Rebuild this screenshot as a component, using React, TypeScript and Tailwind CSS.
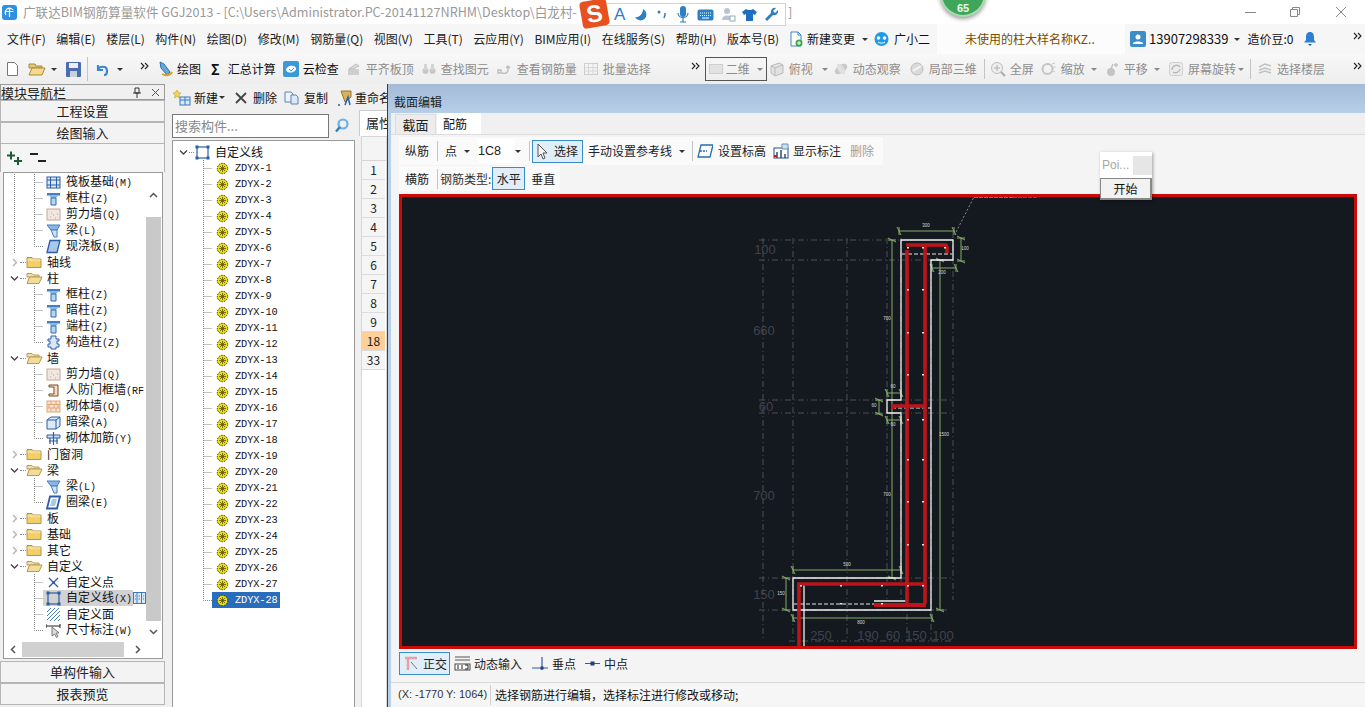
import React from 'react';

const S = ({ children, w = 16, h = 16, vb, className }: { children: React.ReactNode; w?: number; h?: number; vb?: string; className?: string }) => (
  <svg width={w} height={h} viewBox={vb ?? `0 0 ${w} ${h}`} className={`shrink-0 ${className ?? ''}`} fill="none">{children}</svg>
);
const Caret = ({ className }: { className?: string }) => (
  <span className={`inline-block w-0 h-0 border-x-[3px] border-x-transparent border-t-[3px] border-t-[#333] shrink-0 ${className ?? ''}`} />
);
const More = ({ className }: { className?: string }) => (
  <S w={9} h={8} className={className}><path d="M1 1l3 3-3 3M5 1l3 3-3 3" stroke="#222" strokeWidth="1.1" /></S>
);
const Sep = ({ className }: { className?: string }) => <span className={`w-px h-[20px] bg-[#c4c4c4] shrink-0 ${className ?? ''}`} />;

/* ---------- toolbar icons ---------- */
const GrayIcon = ({ kind }: { kind: number }) => (
  <S>
    {kind === 0 && <><rect x="2" y="8" width="11" height="6" fill="#cfcfcf" /><path d="M3 8l7-5 3 2-6 3z" fill="#dedede" stroke="#bbb" /></>}
    {kind === 1 && <><circle cx="4.5" cy="10" r="3" fill="#c8c8c8" /><circle cx="11.5" cy="10" r="3" fill="#c8c8c8" /><rect x="3" y="3" width="3" height="6" fill="#d4d4d4" /><rect x="10" y="3" width="3" height="6" fill="#d4d4d4" /></>}
    {kind === 2 && <path d="M1 9h3v3H1zM5 12c3 1 6 0 6-3V5M9 7l2-2 2 2" stroke="#bdbdbd" strokeWidth="1.4" />}
    {kind === 3 && <><rect x="1.5" y="2.5" width="13" height="11" stroke="#cdcdcd" /><path d="M1.5 6.5h13M1.5 10h13M5.5 2.5v11M10 2.5v11" stroke="#d8d8d8" /></>}
    {kind === 4 && <><path d="M2 5l8-3 4 2v8l-8 3-4-3z" fill="#e2e2e2" stroke="#bbb" /><path d="M6 7v8M6 7l8-3M6 7L2 5" stroke="#bbb" /></>}
    {kind === 5 && <><ellipse cx="8" cy="8" rx="7" ry="4" transform="rotate(-35 8 8)" fill="#c9c9c9" /><ellipse cx="8" cy="8" rx="3" ry="6" transform="rotate(-35 8 8)" fill="#e0e0e0" /></>}
    {kind === 6 && <><circle cx="8" cy="8" r="6" fill="#dadada" stroke="#bcbcbc" /><path d="M4 10l8-5" stroke="#f5f5f5" strokeWidth="2" /></>}
    {kind === 7 && <><circle cx="7" cy="7" r="5.5" stroke="#bcbcbc" fill="#efefef" /><path d="M7 4v6M4 7h6" stroke="#b0b0b0" /><path d="M11 11l4 4" stroke="#aaa" strokeWidth="2" /></>}
    {kind === 8 && <><circle cx="6.5" cy="8" r="5" stroke="#c4c4c4" strokeWidth="2" /><path d="M11 3l3-1M12 6h3M11 10l3 1" stroke="#ccc" /></>}
    {kind === 9 && <><circle cx="7" cy="11" r="4" fill="#c4c4c4" /><path d="M7 8l2-5M12 2v4M10 4h4" stroke="#c0c0c0" strokeWidth="1.4" /></>}
    {kind === 10 && <><rect x="1.5" y="1.5" width="13" height="13" rx="2" fill="#ececec" stroke="#cfcfcf" /><path d="M4 9a4.5 4.5 0 018-3M12 8a4.5 4.5 0 01-7 3" stroke="#b5b5b5" strokeWidth="1.3" /></>}
    {kind === 11 && <path d="M2 6l6-3 6 2M2 9l6-2 6 2M2 12l6-2 6 2" stroke="#c2c2c2" strokeWidth="1.5" />}
  </S>
);
const GrayItem = ({ kind, label, className }: { kind: number; label: string; className?: string }) => (
  <span className={`flex items-center gap-[4px] text-[#8d8d8d] shrink-0 ${className ?? ''}`}><GrayIcon kind={kind} />{label}</span>
);

/* ---------- tree icons ---------- */
const LineIco = () => (
  <>
    <rect x="2" y="2" width="11" height="11" stroke="#2a5ea8" strokeWidth="1.200" />
    <path d="M.5.500h3v3h-3zM11.500.500h3v3h-3zM.5 11.500h3v3h-3zM11.500 11.500h3v3h-3z" fill="#2a5ea8" />
  </>
);
const Tree = ({ k }: { k: string }) => (
  <S w={15} h={15}>
    {k === 'raft' && <><rect x="1" y="2" width="13" height="11" fill="#dbe7f5" stroke="#2a5ea8" /><path d="M1 5h13M1 10h13M4.500 2v11M10.500 2v11" stroke="#2a5ea8" /></>}
    {k === 'col' && <><path d="M1 2h13v2.500H1z" fill="#3f7fc6" /><path d="M3 4.500h9L10 7H5z" fill="#8ab6e4" /><path d="M5 7h5v7H5z" fill="#b9d4ef" stroke="#2e6cb0" /></>}
    {k === 'wall' && <><rect x="1" y="2" width="13" height="11" fill="#f2e7e0" stroke="#c9a48f" /><path d="M4 10h.8M7 8h.8M9 11h.8M11 7h.8M5 6h.8" stroke="#999" /></>}
    {k === 'beam' && <><path d="M1 2h13l-3 5H5z" fill="#8ab6e4" stroke="#3f7fc6" /><path d="M5 7l3 7h3V7z" fill="#cfe1f4" stroke="#3f7fc6" /></>}
    {k === 'slab' && <path d="M4 1.500h10l-3 12H1z" fill="#a9c8ea" stroke="#2a5ea8" strokeWidth="1.300" />}
    {k === 'ring' && <><path d="M4 1.500h10l-3 12H1z" fill="#fff" stroke="#2a5ea8" strokeWidth="1.800" /><path d="M6 4h5l-2 7H4z" fill="#a9c8ea" /></>}
    {k === 'gz' && <path d="M5 1h5v3h3v2h-2v3h2v3h-3v2H5v-2H2V9h2V6H2V4h3z" fill="#d8e6f5" stroke="#2a5ea8" />}
    {k === 'rf' && <path d="M3 2h9v11H3v-2h5V4H3z" fill="#f2ddc8" stroke="#7b4a20" />}
    {k === 'brick' && <><rect x="1" y="2" width="13" height="11" fill="#f8e3cf" stroke="#e0a878" /><path d="M1 5.500h13M1 9h13M5 2v3.500M10 2v3.500M3 5.500V9M8 5.500V9M12 5.500V9M5 9v4M10 9v4" stroke="#e0a878" /></>}
    {k === 'dark' && <><path d="M1 5l4-3h9v9l-4 3H1z" fill="#dce9f6" stroke="#2a5ea8" /><path d="M1 5h9v9M10 5l4-3" stroke="#2a5ea8" /></>}
    {k === 'bar' && <><path d="M1 4h13v3H1z" fill="#cfe1f4" stroke="#2a5ea8" /><path d="M7.500 1v13M3 10h9M4 7v6M11 7v6" stroke="#2a5ea8" strokeWidth="1.200" /></>}
    {k === 'pt' && <><path d="M3 3l9 9M12 3l-9 9" stroke="#2a5ea8" strokeWidth="1.300" /><circle cx="7.500" cy="7.500" r="1.200" fill="#2a5ea8" /></>}
    {k === 'line' && <LineIco />}
    {k === 'face' && <path d="M1 5l4-4M1 9l8-8M1 13L13 1M4 14L14 4M8 14l6-6M12 14l2-2" stroke="#4a7bb8" />}
    {k === 'dim' && <><path d="M0 1v4M14 1v4M0 3h14" stroke="#222" /><path d="M6 4v9l2.500-2 2 3.500 1.500-1-2-3.300 3-.4z" fill="#ddd" stroke="#777" /></>}
  </S>
);
const Folder = ({ open }: { open: boolean }) => (
  <S w={17} h={14}>
    {open ? (
      <><path d="M1 2.500h5l1.500 1.500H13v2H1z" fill="#f1dfa8" stroke="#b89a55" /><path d="M1 12.500L3.500 6H16l-3 6.500z" fill="#f4dd98" stroke="#b89a55" /></>
    ) : (
      <><path d="M1 2.500h5l1.500 1.500H15v8.500H1z" fill="#f2cf6a" stroke="#b5944d" /><path d="M1.500 5h13" stroke="#fff2c4" /></>
    )}
  </S>
);

type Row = { t: 'f' | 'c'; l: string; k?: string; o?: boolean; last?: boolean; outer?: boolean; sel?: boolean };
const rows: Row[] = [
  { t: 'c', l: '筏板基础(M)', k: 'raft', outer: true }, { t: 'c', l: '框柱(Z)', k: 'col', outer: true }, { t: 'c', l: '剪力墙(Q)', k: 'wall', outer: true }, { t: 'c', l: '梁(L)', k: 'beam', outer: true }, { t: 'c', l: '现浇板(B)', k: 'slab', last: true, outer: true },
  { t: 'f', l: '轴线' }, { t: 'f', l: '柱', o: true },
  { t: 'c', l: '框柱(Z)', k: 'col' }, { t: 'c', l: '暗柱(Z)', k: 'col' }, { t: 'c', l: '端柱(Z)', k: 'col' }, { t: 'c', l: '构造柱(Z)', k: 'gz', last: true },
  { t: 'f', l: '墙', o: true },
  { t: 'c', l: '剪力墙(Q)', k: 'wall' }, { t: 'c', l: '人防门框墙(RF', k: 'rf' }, { t: 'c', l: '砌体墙(Q)', k: 'brick' }, { t: 'c', l: '暗梁(A)', k: 'dark' }, { t: 'c', l: '砌体加筋(Y)', k: 'bar', last: true },
  { t: 'f', l: '门窗洞' }, { t: 'f', l: '梁', o: true },
  { t: 'c', l: '梁(L)', k: 'beam' }, { t: 'c', l: '圈梁(E)', k: 'ring', last: true },
  { t: 'f', l: '板' }, { t: 'f', l: '基础' }, { t: 'f', l: '其它' }, { t: 'f', l: '自定义', o: true },
  { t: 'c', l: '自定义点', k: 'pt' }, { t: 'c', l: '自定义线(X)', k: 'line', sel: true }, { t: 'c', l: '自定义面', k: 'face' }, { t: 'c', l: '尺寸标注(W)', k: 'dim', last: true },
];
const mono = "[font-family:'Liberation_Mono',monospace]";

const Chevron = ({ open }: { open: boolean }) => (
  <S w={9} h={9}>
    {open ? <path d="M1 2.500l3.500 3.500L8 2.500" stroke="#444" strokeWidth="1.300" /> : <path d="M3 1l3.500 3.500L3 8" stroke="#b0b0b0" strokeWidth="1.300" />}
  </S>
);

const NavRow = ({ r }: { r: Row }) => {
  const [a, b] = r.l.split('(');
  if (r.t === 'f')
    return (
      <div className="h-[16px] flex items-center pl-[6px] text-[12px] leading-[16px] text-[#111] shrink-0">
        <Chevron open={!!r.o} />
        <span className="w-[6px] border-t border-dotted border-[#888] ml-[1px]" />
        <Folder open={!!r.o} />
        <span className="ml-[4px]">{r.l}</span>
      </div>
    );
  return (
    <div className="h-[16px] flex items-center text-[12px] leading-[16px] text-[#111] shrink-0 whitespace-nowrap">
      <S w={39} h={16}>
        <path d={r.last ? 'M30.500 0v8.500H39' : 'M30.500 0v16M30.500 8.500H39'} stroke="#888" strokeDasharray="1 1" />
        {r.outer && <path d="M10.500 0v16" stroke="#888" strokeDasharray="1 1" />}
      </S>
      <span className={`flex items-center pl-[3px] h-[16px] ${r.sel ? 'bg-[#d2d2d2] w-[90px]' : ''}`}>
        <Tree k={r.k!} />
        <span className="block pl-[5px]">
          {a}
          {b && <span className={`${mono} text-[10px]`}>({b}</span>}
        </span>
      </span>
      {r.sel && (
        <S w={13} h={14}><rect x=".5" y="1.500" width="12" height="11" fill="#dbe9f7" stroke="#3a78c0" /><path d="M4 2v10M8.500 2v10M2 5h1M2 8h1M5.500 5h1.500M5.500 8h1.500M10 5h1M10 8h1" stroke="#3a78c0" /></S>
      )}
    </div>
  );
};

const Gear = () => (
  <S w={13} h={13}>
    <circle cx="6.500" cy="6.500" r="5.200" fill="#ece000" stroke="#333" strokeDasharray="1.500 1" />
    <path d="M3 6.500h7M6.500 3v7M4 4l5 5M9 4l-5 5" stroke="#5a5400" strokeWidth=".8" />
  </S>
);

const PanelBtn = ({ children }: { children: React.ReactNode }) => (
  <div className="h-[22px] flex items-center justify-center border border-[#b5b5b5] bg-[#f3f3f3] text-[13px] text-[#222] shrink-0">{children}</div>
);

const ScrollArrow = ({ d }: { d: string }) => (
  <S w={9} h={9}><path d={d} stroke="#555" strokeWidth="1.500" /></S>
);

/* ---------- CAD drawing ---------- */
const Green = '#86ab6c';
const G = ({ x1, y1, x2, y2 }: { x1: number; y1: number; x2: number; y2: number }) => {
  const h = y1 === y2;
  const tick = (x: number, y: number) =>
    h ? `M${x - 2} ${y - 4}L${x + 2} ${y + 4}M${x} ${y - 4}V${y + 4}` : `M${x - 4} ${y - 2}L${x + 4} ${y + 2}M${x - 4} ${y}H${x + 4}`;
  return <path d={`M${x1} ${y1}L${x2} ${y2}${tick(x1, y1)}${tick(x2, y2)}`} stroke={Green} strokeWidth="1" />;
};
const Small = ({ x, y, v }: { x: number; y: number; v: string }) => (
  <text x={x} y={y} fill="#d8d8d8" fontSize="4.500" textAnchor="middle" fontFamily="Liberation Sans, sans-serif">{v}</text>
);
const Dim = ({ x, y, v }: { x: number; y: number; v: string }) => (
  <text x={x} y={y} fill="#3f444c" fontSize="13" textAnchor="middle" fontFamily="Liberation Sans, sans-serif">{v}</text>
);
const Drawing = () => (
  <svg width="951" height="449" viewBox="403 197 951 449" className="block" fill="none">
    <g stroke="#5a5e64" strokeDasharray="6 3 1 3" strokeWidth=".8">
      <path d="M764 238V641M794 238V641M848 238V641M888 238V600M902 238V600M954 232V600M932 260V641M908 575V641" />
      <path d="M760 240H902M760 260H954M760 400H954M760 413H954M760 578H954M760 610H950M790 641H955" />
    </g>
    <path d="M957 232L975 197" stroke="#8a8e92" strokeDasharray="2 2" />
    <path d="M975 197H1014" stroke="#d8d8d8" strokeDasharray="4 1" />
    <path d="M1014 197H1038" stroke="#6fbf5f" strokeDasharray="4 1" />

    <G x1={900} y1={231} x2={955} y2={231} />
    <G x1={893} y1={240} x2={893} y2={578} />
    <G x1={941} y1={260} x2={941} y2={610} />
    <G x1={962} y1={238} x2={962} y2={261} />
    <G x1={933} y1={268} x2={957} y2={268} />
    <G x1={888} y1={393} x2={902} y2={393} />
    <G x1={880} y1={400} x2={880} y2={414} />
    <G x1={888} y1={420} x2={902} y2={420} />
    <G x1={794} y1={570} x2={902} y2={570} />
    <G x1={787} y1={578} x2={787} y2={610} />
    <G x1={794} y1={618} x2={933} y2={618} />

    <path d="M902 240H954V260H932V610H794V578H902V413H888V400H902Z" stroke="#f2f2f2" strokeWidth="1.300" />
    <path d="M903 254H953M893 408H932M795 604H875" stroke="#e8e8e8" strokeDasharray="4 2" />
    <path d="M805 584V646" stroke="#f2f2f2" strokeWidth="1.300" />
    <path d="M875 601H908" stroke="#f2f2f2" strokeWidth="1.300" />

    <g stroke="#bd141c" strokeWidth="3.600">
      <path d="M908 250V604M926 245V604" />
      <path d="M907 245H946Q948 245 948 248V253" />
      <path d="M894 409V406H926" />
      <path d="M800 646V584H926" />
      <path d="M875 605H927" strokeWidth="4" />
    </g>
    <g fill="#f0e6d8">
      {[289, 332, 374, 419, 459, 501, 544, 585].map((y) => (
        <React.Fragment key={y}>
          <rect x="908" y={y} width="2" height="1.500" />
          <rect x="923" y={y} width="2" height="1.500" />
        </React.Fragment>
      ))}
      <rect x="908" y="247" width="2" height="1.500" /><rect x="923" y="247" width="2" height="1.500" /><rect x="945" y="247" width="2" height="1.500" />
      <rect x="841" y="585" width="2" height="1.500" /><rect x="882" y="585" width="2" height="1.500" /><rect x="801" y="585" width="2" height="1.500" />
      <rect x="841" y="603" width="2" height="1.500" /><rect x="882" y="603" width="2" height="1.500" />
    </g>

    <Small x={927} y={227} v="300" /><Small x={943} y={274} v="200" /><Small x={966} y={250} v="100" />
    <Small x={888} y={320} v="700" /><Small x={945} y={436} v="1500" /><Small x={888} y={496} v="700" />
    <Small x={848} y={566} v="500" /><Small x={862} y={624} v="800" /><Small x={782} y={595} v="150" />
    <Small x={875} y={407} v="60" /><Small x={894} y={388} v="60" /><Small x={894} y={426} v="60" />

    <Dim x={766} y={254} v="100" /><Dim x={765} y={335} v="660" /><Dim x={767} y={411} v="60" />
    <Dim x={765} y={500} v="700" /><Dim x={765} y={599} v="150" />
    <Dim x={822} y={640} v="250" /><Dim x={869} y={640} v="190" /><Dim x={894} y={640} v="60" /><Dim x={917} y={640} v="150" /><Dim x={944} y={640} v="100" />
  </svg>
);

export default function App() {
  return (
    <div className="relative w-[1365px] h-[707px] overflow-hidden flex flex-col bg-[#f0f0f0] text-[12px] text-[#222] whitespace-nowrap [font-family:'Noto_Sans_CJK_SC','Liberation_Sans',sans-serif]">
      {/* title bar */}
      <div className="h-[24px] bg-white flex items-center pl-[2px] shrink-0">
        <S w={15} h={15}>
          <rect x="0" y="0" width="15" height="15" rx="3" fill="#2f8fe0" />
          <path d="M7.500 3v9M3.500 6.500h8M4 10a4 4 0 017-5" stroke="#fff" strokeWidth="1.200" />
        </S>
        <span className="ml-[6px] text-[12.600px] text-[#999]">广联达BIM钢筋算量软件 GGJ2013 - [C:\Users\Administrator.PC-20141127NRHM\Desktop\白龙村-</span>
        <span className="ml-[211px] text-[13px] text-[#999]">]</span>
        <span className="ml-auto w-[11px] h-px bg-[#888]" />
        <span className="ml-[34px]"><S w={10} h={10}><path d="M.5 2.500h7v7h-7zM2.500 2.500v-2h7v7h-2" stroke="#888" /></S></span>
        <span className="ml-[36px] mr-[19px]"><S w={10} h={10}><path d="M0 0l10 10M10 0L0 10" stroke="#888" /></S></span>
      </div>

      {/* menu bar */}
      <div className="h-[30px] bg-[#f6f6f6] flex items-center pl-[7px] shrink-0">
        <div className="flex items-center gap-[10.600px]">
          {['文件(F)', '编辑(E)', '楼层(L)', '构件(N)', '绘图(D)', '修改(M)', '钢筋量(Q)', '视图(V)', '工具(T)', '云应用(Y)', 'BIM应用(I)', '在线服务(S)', '帮助(H)', '版本号(B)'].map((m) => (
            <span key={m}>{m}</span>
          ))}
        </div>
        <span className="ml-[9px]">
          <S><path d="M3 1h7l3 3v11H3z" fill="#fff" stroke="#3c85c8" /><path d="M10 1v3h3" stroke="#3c85c8" /><circle cx="11" cy="12" r="3.500" fill="#3ea83e" /><path d="M9 12h4M11 10v4" stroke="#fff" /></S>
        </span>
        <span className="ml-[3px] text-[#111]">新建变更</span>
        <Caret className="ml-[7px]" />
        <span className="ml-[5px]">
          <S w={17} h={16}><circle cx="8.500" cy="8" r="7" fill="#1e9be6" /><circle cx="5.500" cy="7" r="1.800" fill="#fff" /><circle cx="11.500" cy="7" r="1.800" fill="#fff" /><path d="M5 11c2 1.500 5 1.500 7 0" stroke="#fff" /></S>
        </span>
        <span className="ml-[4px] text-[#111]">广小二</span>
        <span className="ml-[7px] w-[188px] h-[30px] bg-white/70 flex items-center pl-[28px] text-[#7a4a00] text-[12px]">未使用的柱大样名称KZ..</span>
        <span className="ml-[5px]">
          <S><rect width="16" height="16" rx="2" fill="#3c8dc8" /><circle cx="8" cy="6" r="2.500" fill="#fff" /><path d="M3 13h10v-1c-2-2-8-2-10 0z" fill="#fff" /></S>
        </span>
        <span className="ml-[3px] text-[13px] text-[#111]">13907298339</span>
        <Caret className="ml-[6px]" />
        <span className="ml-[7px] text-[#111]">造价豆:0</span>
        <span className="ml-[10px]">
          <S w={14} h={16}><path d="M7 1c3 0 4 2.500 4 5v3l2 2.500H1L3 9V6c0-2.500 1-5 4-5z" fill="#2d7fd6" /><path d="M5 13h4l-2 2z" fill="#1f5fa8" /></S>
        </span>
        <More className="ml-auto mr-[3px] mb-[6px]" />
      </div>

      {/* main toolbar */}
      <div className="h-[30px] bg-gradient-to-b from-[#f8f8f8] to-[#ededed] flex items-center pl-[6px] shrink-0">
        <S w={13} h={16}><path d="M1.500 1.500h7l3 3v10h-10z" fill="#fff" stroke="#777" /></S>
        <span className="ml-[9px]"><S w={18} h={16}><path d="M1 3h6l1 2h6v2H1z" fill="#e6c676" stroke="#a98b3d" /><path d="M1 14l3-7h13l-3 7z" fill="#f5d98d" stroke="#a98b3d" /></S></span>
        <Caret className="ml-[5px]" />
        <span className="ml-[9px]"><S w={15} h={15}><rect width="15" height="15" rx="1" fill="#4a6cb0" /><rect x="3" y="1" width="9" height="5" fill="#e9eef7" /><rect x="4" y="9" width="7" height="6" fill="#c9cfdb" /></S></span>
        <Sep className="ml-[6px] h-[24px]" />
        <span className="ml-[7px]"><S w={14} h={14}><path d="M3 3v5h5M3 8c1-4 9-5 9 1 0 2-1 4-3 4" stroke="#3c85d0" strokeWidth="2.200" /></S></span>
        <Caret className="ml-[8px]" />
        <More className="ml-[17px] mb-[6px]" />
        <span className="ml-[8px]"><S><path d="M3 1l4 2 6 8-3 3-6-7z" fill="#6aa5dc" stroke="#2d6fb5" /><path d="M5 13c3 2 8 2 10-2" stroke="#d9a520" strokeWidth="2" /></S></span>
        <span className="ml-[4px] text-[#111]">绘图</span>
        <span className="ml-[10px] text-[14px] font-bold leading-none text-[#111]">Σ</span>
        <span className="ml-[8px] text-[#111]">汇总计算</span>
        <span className="ml-[7px]"><S><rect width="16" height="16" rx="2" fill="#3a9ad9" /><path d="M3 9c0-4 8-6 10-2 1 4-8 7-10 2z" fill="#fff" /><path d="M6 8l2 2 3-3" stroke="#3a9ad9" /></S></span>
        <span className="ml-[4px] text-[#111]">云检查</span>
        <GrayItem kind={0} label="平齐板顶" className="ml-[7px]" />
        <GrayItem kind={1} label="查找图元" className="ml-[7px]" />
        <GrayItem kind={2} label="查看钢筋量" className="ml-[8px]" />
        <GrayItem kind={3} label="批量选择" className="ml-[6px]" />
        <More className="ml-[40px] mb-[6px]" />
        <span className="ml-[5px] w-[62px] h-[24px] border border-[#555] flex items-center pl-[3px] text-[#8d8d8d] shrink-0">
          <span className="w-[14px] h-[10px] bg-[#e2e2e2] border border-[#cfcfcf]" />
          <span className="ml-[3px]">二维</span>
          <Caret className="ml-[7px] border-t-[#888]" />
        </span>
        <GrayItem kind={4} label="俯视" className="ml-[2px]" />
        <Caret className="ml-[9px] border-t-[#888]" />
        <GrayItem kind={5} label="动态观察" className="ml-[5px]" />
        <GrayItem kind={6} label="局部三维" className="ml-[8px]" />
        <Sep className="ml-[7px]" />
        <GrayItem kind={7} label="全屏" className="ml-[5px]" />
        <GrayItem kind={8} label="缩放" className="ml-[7px]" />
        <Caret className="ml-[6px] border-t-[#888]" />
        <GrayItem kind={9} label="平移" className="ml-[7px]" />
        <Caret className="ml-[6px] border-t-[#888]" />
        <GrayItem kind={10} label="屏幕旋转" className="ml-[8px]" />
        <Caret className="ml-[2px] border-t-[#888]" />
        <Sep className="ml-[6px]" />
        <GrayItem kind={11} label="选择楼层" className="ml-[6px]" />
        <More className="ml-auto mr-[3px] mb-[6px]" />
      </div>

      {/* workspace */}
      <div className="flex-1 min-h-0 flex">
        {/* nav panel */}
        <div className="w-[165px] shrink-0 flex flex-col bg-[#f0f0f0]">
          <div className="h-[16px] flex items-center border border-[#999] bg-[#f0f0f0] text-[13px] leading-none shrink-0">
            <span className="flex-1">模块导航栏</span>
            <S w={10} h={11}><path d="M3 1h4v5H3zM1 6h8M5 6v5" stroke="#333" /></S>
            <S w={10} h={9} className="ml-[9px] mr-[3px]"><path d="M1 1l7 7M8 1L1 8" stroke="#555" /></S>
          </div>
          <PanelBtn>工程设置</PanelBtn>
          <PanelBtn>绘图输入</PanelBtn>
          <div className="h-[28px] flex items-center pl-[5px] gap-[7px] shrink-0 bg-[#f5f5f5] border-x border-[#b5b5b5]">
            <S w={17} h={14}><path d="M1 4.500h8M5 .5v8M8 10h8M12 6v8" stroke="#1f5a30" strokeWidth="2" /></S>
            <S w={17} h={14}><path d="M0 3h8M8 10h8" stroke="#222" strokeWidth="2" /></S>
          </div>
          <div className="flex-1 min-h-0 ml-[3px] mr-[2px] border border-[#9a9a9a] bg-white flex flex-col">
            <div className="flex-1 min-h-0 flex">
              <div className="w-[142px] overflow-hidden flex flex-col pt-[1px]">
                {rows.map((r, i) => <NavRow key={i} r={r} />)}
              </div>
              <div className="w-[15px] flex flex-col items-center shrink-0">
                <span className="h-[44px] flex items-center"><ScrollArrow d="M1 6l3.500-3.500L8 6" /></span>
                <span className="flex-1 w-full bg-[#c9c9c9]" />
                <span className="h-[20px] flex items-center"><ScrollArrow d="M1 3l3.500 3.500L8 3" /></span>
              </div>
            </div>
            <div className="h-[17px] flex items-center shrink-0 bg-white">
              <span className="w-[18px] flex justify-center"><ScrollArrow d="M6 1L2.500 4.500 6 8" /></span>
              <span className="w-[102px] h-[15px] bg-[#d0d0d0]" />
              <span className="w-[26px] flex justify-center"><ScrollArrow d="M3 1l3.500 3.500L3 8" /></span>
            </div>
          </div>
          <div className="mt-[2px]"><PanelBtn>单构件输入</PanelBtn></div>
          <div className="mb-[2px]"><PanelBtn>报表预览</PanelBtn></div>
        </div>

        {/* component list */}
        <div className="w-[190px] ml-[5px] shrink-0 flex flex-col">
          <div className="h-[27px] flex items-center pl-[3px] text-[#111] shrink-0">
            <S w={18} h={16}><path d="M4 0l1.500 2.500L8 3 6 5l.5 3L4 6.500 1.500 8 2 5 0 3l2.500-.5z" fill="#f2d24f" stroke="#b59a2a" strokeWidth=".5" /><rect x="7" y="7" width="10" height="8" fill="#dce9f6" stroke="#3a78c0" /><path d="M7 10h10M12 7v8" stroke="#3a78c0" /></S>
            <span className="ml-[3px]">新建</span>
            <Caret className="ml-[1px]" />
            <S w={14} h={14} className="ml-[9px]"><path d="M2 2l10 10M12 2L2 12" stroke="#444" strokeWidth="1.800" /></S>
            <span className="ml-[5px]">删除</span>
            <S w={16} h={14} className="ml-[7px]"><path d="M1 1h6l2 2v8H1z" fill="#eef4fb" stroke="#5a83b5" /><path d="M7 4h5l2 2v7H7z" fill="#dce9f6" stroke="#5a83b5" /></S>
            <span className="ml-[4px]">复制</span>
            <S w={16} h={16} className="ml-[8px]"><path d="M5 1h10v6L9 12z" fill="#d9b35a" stroke="#99772a" /><path d="M2 15h2M9 15l3-8 2 8" stroke="#2a5ea8" strokeWidth="1.500" /></S>
            <span className="ml-[3px]">重命名</span>
          </div>
          <div className="h-[29px] flex items-center pl-[2px] shrink-0">
            <span className="w-[157px] h-[24px] border border-[#777] bg-white flex items-center pl-[2px] text-[13px] text-[#888]">搜索构件...</span>
            <span className="ml-[5px]"><S w={15} h={15}><circle cx="9" cy="6" r="4.500" stroke="#6ab0e6" strokeWidth="2.200" /><path d="M6 9l-4 4.500" stroke="#2c7fc0" strokeWidth="2.500" /></S></span>
          </div>
          <div className="flex-1 min-h-0 ml-[2px] mr-[5px] border border-[#9a9a9a] border-b-0 bg-white flex flex-col pt-[2px] overflow-hidden">
            <div className="h-[16px] flex items-center pl-[6px] shrink-0 mt-[1px]">
              <Chevron open />
              <span className="w-[5px] border-t border-dotted border-[#888] ml-[1px]" />
              <span className="ml-[1px]"><S w={15} h={15}><LineIco /></S></span>
              <span className="ml-[5px] text-[12px] text-[#111]">自定义线</span>
            </div>
            {Array.from({ length: 28 }, (_, i) => i + 1).map((n) => (
              <div key={n} className="h-[16px] flex items-center shrink-0">
                <S w={39} h={16}><path d={n === 28 ? 'M30.500 0v8.500H39' : 'M30.500 0v16M30.500 8.500H39'} stroke="#888" strokeDasharray="1 1" /></S>
                <span className={`flex items-center pl-[4px] h-[16px] w-[68px] ${n === 28 ? 'bg-[#2a6dbd] text-white' : 'text-[#111]'}`}>
                  <Gear />
                  <span className={`${mono} ml-[6px] text-[10.300px] leading-[16px] tracking-[-0.1px]`}>ZDYX-{n}</span>
                </span>
              </div>
            ))}
          </div>
        </div>

        {/* properties, cut off by the editor window */}
        <div className="w-[28px] shrink-0 flex flex-col -ml-px overflow-hidden">
          <div className="h-[26px] mt-[26px] text-[13px] leading-[24px] pl-[6px] bg-white border-l border-t border-[#ccc] shrink-0 overflow-hidden">属性</div>
          <div className="flex-1 ml-[2px] bg-white border border-[#d6d6d6] border-b-0 flex flex-col overflow-hidden">
            <div className="h-[24px] shrink-0 bg-[#f4f4f4] border-b border-[#d6d6d6]" />
            {['1', '2', '3', '4', '5', '6', '7', '8', '9', '18', '33'].map((n) => (
              <div key={n} className={`h-[19px] shrink-0 flex items-center justify-center border-b border-[#dcdcdc] w-[23px] text-[12px] ${n === '18' ? 'bg-[#fdd09a]' : 'bg-[#f5f5f5]'}`}>{n}</div>
            ))}
          </div>
        </div>

        {/* section editor */}
        <div className="flex-1 min-w-0 flex flex-col border-l border-[#3c3c3c] bg-gradient-to-b from-[#a3bbd7] to-[#b8cfe8] to-[30px]">
          <div className="h-[29px] flex items-end pl-[6px] pb-[5px] text-[#222] shrink-0 leading-none">截面编辑</div>
          <div className="flex-1 min-h-0 ml-[3px] flex flex-col bg-[#f4f4f4]">
            <div className="h-[21px] flex items-end pl-[4px] bg-[#f0f0f0] shrink-0">
              <span className="w-[41px] h-[20px] bg-[#ececec] border border-[#ddd] border-b-0 flex items-center justify-center text-[13px]">截面</span>
              <span className="w-[44px] h-[21px] ml-[1px] bg-white flex items-center pl-[6px] text-[#111]">配筋</span>
            </div>
            <div className="h-px bg-[#dcdcdc] shrink-0" />
            <div className="flex-1 min-h-0 pl-[8px] pr-[8px] flex flex-col pt-[3px]">
              {/* row 1 */}
              <div className="h-[28px] flex items-center shrink-0 bg-[#fafafa] w-[484px] pl-[6px] -mt-[1px]">
                <span>纵筋</span>
                <Sep className="ml-[8px]" />
                <span className="ml-[7px]">点</span>
                <Caret className="ml-[7px]" />
                <span className="ml-[7px] w-[37px] h-[24px] bg-white flex items-center pl-[1px] text-[12.500px] [font-family:'Liberation_Sans',sans-serif]">1C8</span>
                <Caret className="ml-[1px]" />
                <Sep className="ml-[8px]" />
                <span className="ml-[2px] w-[51px] h-[23px] bg-[#e0eef9] border border-[#3a8cc4] flex items-center pl-[3px] gap-[5px]">
                  <S w={13} h={17}><path d="M2 1l9 9H7l2 5-2 1-2-5-3 3z" fill="#f4f4f4" stroke="#555" /></S>
                  <span>选择</span>
                </span>
                <span className="ml-[5px]">手动设置参考线</span>
                <Caret className="ml-[7px]" />
                <Sep className="ml-[7px]" />
                <span className="ml-[4px]"><S><path d="M4 2h12l-3 12H1z" stroke="#2a6eb0" strokeWidth="1.300" /><path d="M3 8h7" stroke="#2a6eb0" strokeWidth="1.500" strokeDasharray="2 1" /></S></span>
                <span className="ml-[5px]">设置标高</span>
                <span className="ml-[7px]"><S><rect x="1" y="5" width="14" height="10" stroke="#2a4f80" fill="#fff" /><path d="M4 15V9M8 15V7M12 15v-4" stroke="#2a4f80" strokeWidth="1.500" /><path d="M9 1h6v5H9z" fill="#cfe1f4" stroke="#6b8fb8" /><path d="M1 13h3" stroke="#c02020" strokeWidth="2" /></S></span>
                <span className="ml-[4px]">显示标注</span>
                <span className="ml-[9px] text-[#a0a0a0]">删除</span>
              </div>
              {/* row 2 */}
              <div className="h-[25px] flex items-center shrink-0 bg-[#fafafa] w-[161px] pl-[6px] mt-[1px]">
                <span>横筋</span>
                <Sep className="ml-[8px]" />
                <span className="ml-[2px] text-[#333]">钢筋类型:</span>
                <span className="ml-[1px] w-[33px] h-[23px] bg-[#e0eef9] border border-[#3a8cc4] flex items-center justify-center">水平</span>
                <span className="ml-[6px]">垂直</span>
              </div>
              {/* canvas */}
              <div className="h-[455px] mt-[3px] shrink-0 border-[3px] border-[#cc0a0a] bg-[#14181f] overflow-hidden">
                <Drawing />
              </div>
              {/* row 3 */}
              <div className="h-[25px] mt-[2px] flex items-center shrink-0">
                <span className="w-[51px] h-[23px] bg-[#e0eef9] border border-[#3a8cc4] flex items-center pl-[4px] gap-[4px]">
                  <S w={15} h={15}><path d="M1 2h12M4 2v12" stroke="#e8a0a0" strokeWidth="2.500" /><path d="M7 6l6 7" stroke="#777" /></S>
                  <span>正交</span>
                </span>
                <span className="ml-[4px]"><S w={17} h={15}><path d="M1 1h15M1 4h15" stroke="#555" /><rect x="1" y="8" width="15" height="6" fill="#fff" stroke="#444" /><path d="M4 9v4M8 9v4M11 9h3v4h-3" stroke="#222" /></S></span>
                <span className="ml-[3px]">动态输入</span>
                <span className="ml-[10px]"><S w={17} h={15}><path d="M0 12h16M10 1v13" stroke="#2a5ea8" strokeWidth="1.200" /><rect x="8.500" y="10.500" width="3" height="3" fill="#1f3f80" /></S></span>
                <span className="ml-[3px]">垂点</span>
                <span className="ml-[9px]"><S w={15} h={9}><path d="M0 4.500h15" stroke="#2a5ea8" /><rect x="5.500" y="2.500" width="4" height="4" fill="#1f3f80" /></S></span>
                <span className="ml-[4px]">中点</span>
              </div>
              <div className="h-[6px] shrink-0" />
              {/* status */}
              <div className="h-[24px] -ml-[8px] pl-[7px] -mr-[8px] flex items-center border-t border-[#d8d8d8] shrink-0 bg-[#f6f6f6]">
                <span className="text-[11px] [font-family:'Liberation_Sans',sans-serif] text-[#333]">(X: -1770 Y: 1064)</span>
                <span className="w-px h-[20px] bg-[#cfcfcf] ml-[3px]" />
                <span className="ml-[4px] text-[#111]">选择钢筋进行编辑，选择标注进行修改或移动;</span>
              </div>
            </div>
          </div>
        </div>
      </div>

      {/* IME status bar */}
      <div className="absolute left-[601px] top-[3px] w-[185px] h-[23px] bg-white border border-[#c8d4e0] flex items-center pl-[12px] gap-[6px]">
        <span className="text-[17px] leading-none text-[#2d7fc4] [font-family:'Liberation_Sans',sans-serif]">A</span>
        <S w={14} h={14} className="ml-[3px]"><path d="M9 1a6 6 0 11-8 8c4 1 8-3 8-8z" fill="#2d7fc4" /></S>
        <S w={12} h={12} className="ml-[2px]"><circle cx="3" cy="3" r="1.500" fill="#2d7fc4" /><path d="M9 4v2l-1 3" stroke="#2d7fc4" strokeWidth="1.500" /></S>
        <S w={14} h={19} className="ml-[2px]"><rect x="4" y="1" width="6" height="11" rx="3" fill="#2d7fc4" /><path d="M2 8c0 6 10 6 10 0M7 13v4M4 17h6" stroke="#2d7fc4" strokeWidth="1.200" /></S>
        <S w={17} h={12} className="ml-[1px]"><rect x=".5" y=".5" width="16" height="11" rx="2" fill="#2d7fc4" /><path d="M3 4h11M3 6.500h11" stroke="#fff" strokeDasharray="1 1" /><path d="M5 9h7" stroke="#fff" /></S>
        <S w={15} h={15} className="ml-[1px]"><circle cx="6" cy="4" r="3" fill="#b7c4d2" /><path d="M1 13c0-6 10-6 10 0z" fill="#b7c4d2" /><rect x="9" y="9" width="5" height="5" fill="#fff" stroke="#98a8b8" /></S>
        <S w={15} h={14}><path d="M4 1L0 4l2 3 2-1v7h7V6l2 1 2-3-4-3-2 1H6z" fill="#1f6fc0" /></S>
        <S w={15} h={15} className="ml-[1px]"><path d="M14 3l-3 3-2-2 3-3a4 4 0 00-5 5L1 12l2 2 6-6a4 4 0 005-5z" fill="#2d7fc4" /></S>
      </div>
      {/* IME logo */}
      <div className="absolute left-[581px] top-0 w-[27px] h-[27px] -rotate-[10deg] rounded-[4px] bg-[#e8501f] flex items-center justify-center">
        <span className="text-[24px] leading-none font-bold text-white [font-family:'Liberation_Sans',sans-serif]">S</span>
      </div>
      {/* floating ball */}
      <div className="absolute left-[940px] -top-[29px] w-[46px] h-[46px] rounded-full bg-[#3fa55a] border-2 border-[#a8dcb0] shadow-[0_2px_4px_rgba(0,0,0,0.4)] flex items-end justify-center">
        <span className="text-[11px] font-bold leading-[14px] text-[#e8ffe8] [font-family:'Liberation_Sans',sans-serif]">65</span>
      </div>
      {/* Poi popup */}
      <div className="absolute left-[1100px] top-[152px] w-[52px] h-[48px] bg-white shadow-[1px_1px_3px_rgba(0,0,0,0.35)] flex flex-col">
        <div className="h-[26px] flex items-center pl-[2px] text-[12px] text-[#a8a8a8] [font-family:'Liberation_Sans',sans-serif]">
          Poi...
          <span className="ml-[4px] w-[19px] h-[19px] bg-[#e6e6e6]" />
        </div>
        <div className="h-[22px] border border-[#888] border-b-2 border-r-2 bg-[#f2f2f2] flex items-center justify-center text-[12px] text-[#111]">开始</div>
      </div>
    </div>
  );
}
